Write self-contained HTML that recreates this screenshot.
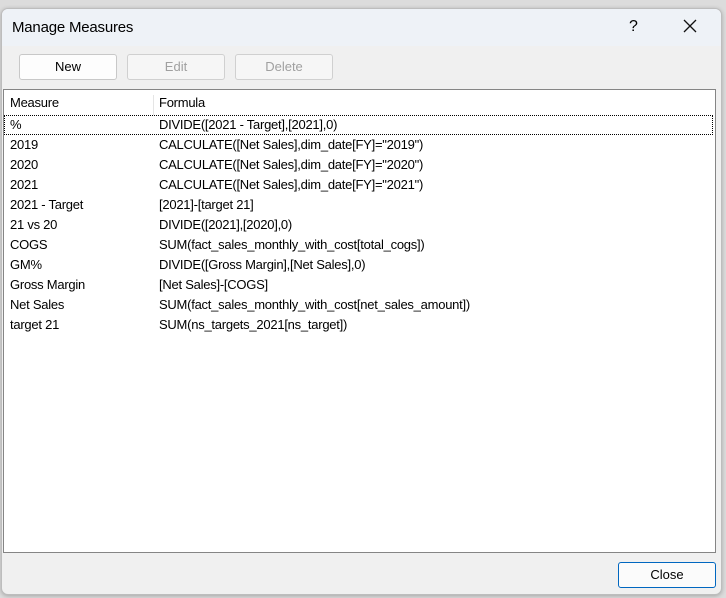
<!DOCTYPE html>
<html><head><style>
body{margin:0;width:726px;height:598px;background:#dcdcdc;position:relative;overflow:hidden;font-family:"Liberation Sans",sans-serif;font-size:13px;color:#000}
.win{position:absolute;left:1px;top:8px;width:719px;height:585px;background:#f0f0f0;border:1px solid #bdbdbd;border-radius:7px;overflow:hidden;box-shadow:0 1px 4px rgba(0,0,0,.25)}
.title{position:absolute;left:0;top:0;width:100%;height:37px;background:#eef2f7}
.title span{position:absolute;left:10px;top:10px;font-size:15px;letter-spacing:-0.2px}
.q{position:absolute;left:627px;top:9px;font-size:16px}
.x{position:absolute;left:681px;top:10px}
.btn{position:absolute;top:45px;width:96px;height:24px;border:1px solid #d0d0d0;border-radius:3px;background:#f6f6f6;text-align:center;line-height:24px;color:#a0a0a0}
.list{position:absolute;left:1px;top:80px;width:711px;height:462px;background:#fff;border:1px solid #858585;letter-spacing:-0.25px}
.row{position:absolute;left:0;height:20px;line-height:20px;width:100%}
.row .a{position:absolute;left:6px}.row .b{position:absolute;left:155px}
.hdr .sep{position:absolute;left:149px;top:2px;width:1px;height:20px;background:#e5e5e5}
.close{position:absolute;left:616px;top:553px;width:96px;height:24px;border:1px solid #0067c0;border-radius:3px;background:#fbfbfb;text-align:center;line-height:24px}
</style></head><body>
<div class="win">
<div class="title"><span>Manage Measures</span><div class="q">?</div>
<svg class="x" width="14" height="14"><path d="M1 1L13 13M13 1L1 13" stroke="#111" stroke-width="1.3"/></svg></div>
<div class="btn" style="left:17px;background:#fdfdfd;border-color:#c8c8c8;color:#000">New</div>
<div class="btn" style="left:125px">Edit</div>
<div class="btn" style="left:233px">Delete</div>
<div class="list">
<div class="row hdr" style="top:3px"><span class="a">Measure</span><div class="sep"></div><span class="b">Formula</span></div>
<div class="row" style="top:25px;border:1px dotted #000;box-sizing:border-box;width:709px;left:0"><span class="a" style="left:5px;top:-1px">%</span><span class="b" style="left:154px;top:-1px">DIVIDE([2021 - Target],[2021],0)</span></div>
<div class="row" style="top:45px"><span class="a">2019</span><span class="b">CALCULATE([Net Sales],dim_date[FY]="2019")</span></div>
<div class="row" style="top:65px"><span class="a">2020</span><span class="b">CALCULATE([Net Sales],dim_date[FY]="2020")</span></div>
<div class="row" style="top:85px"><span class="a">2021</span><span class="b">CALCULATE([Net Sales],dim_date[FY]="2021")</span></div>
<div class="row" style="top:105px"><span class="a">2021 - Target</span><span class="b">[2021]-[target 21]</span></div>
<div class="row" style="top:125px"><span class="a">21 vs 20</span><span class="b">DIVIDE([2021],[2020],0)</span></div>
<div class="row" style="top:145px"><span class="a">COGS</span><span class="b">SUM(fact_sales_monthly_with_cost[total_cogs])</span></div>
<div class="row" style="top:165px"><span class="a">GM%</span><span class="b">DIVIDE([Gross Margin],[Net Sales],0)</span></div>
<div class="row" style="top:185px"><span class="a">Gross Margin</span><span class="b">[Net Sales]-[COGS]</span></div>
<div class="row" style="top:205px"><span class="a">Net Sales</span><span class="b">SUM(fact_sales_monthly_with_cost[net_sales_amount])</span></div>
<div class="row" style="top:225px"><span class="a">target 21</span><span class="b">SUM(ns_targets_2021[ns_target])</span></div>
</div>
<div class="close">Close</div>
</div>
</body></html>
